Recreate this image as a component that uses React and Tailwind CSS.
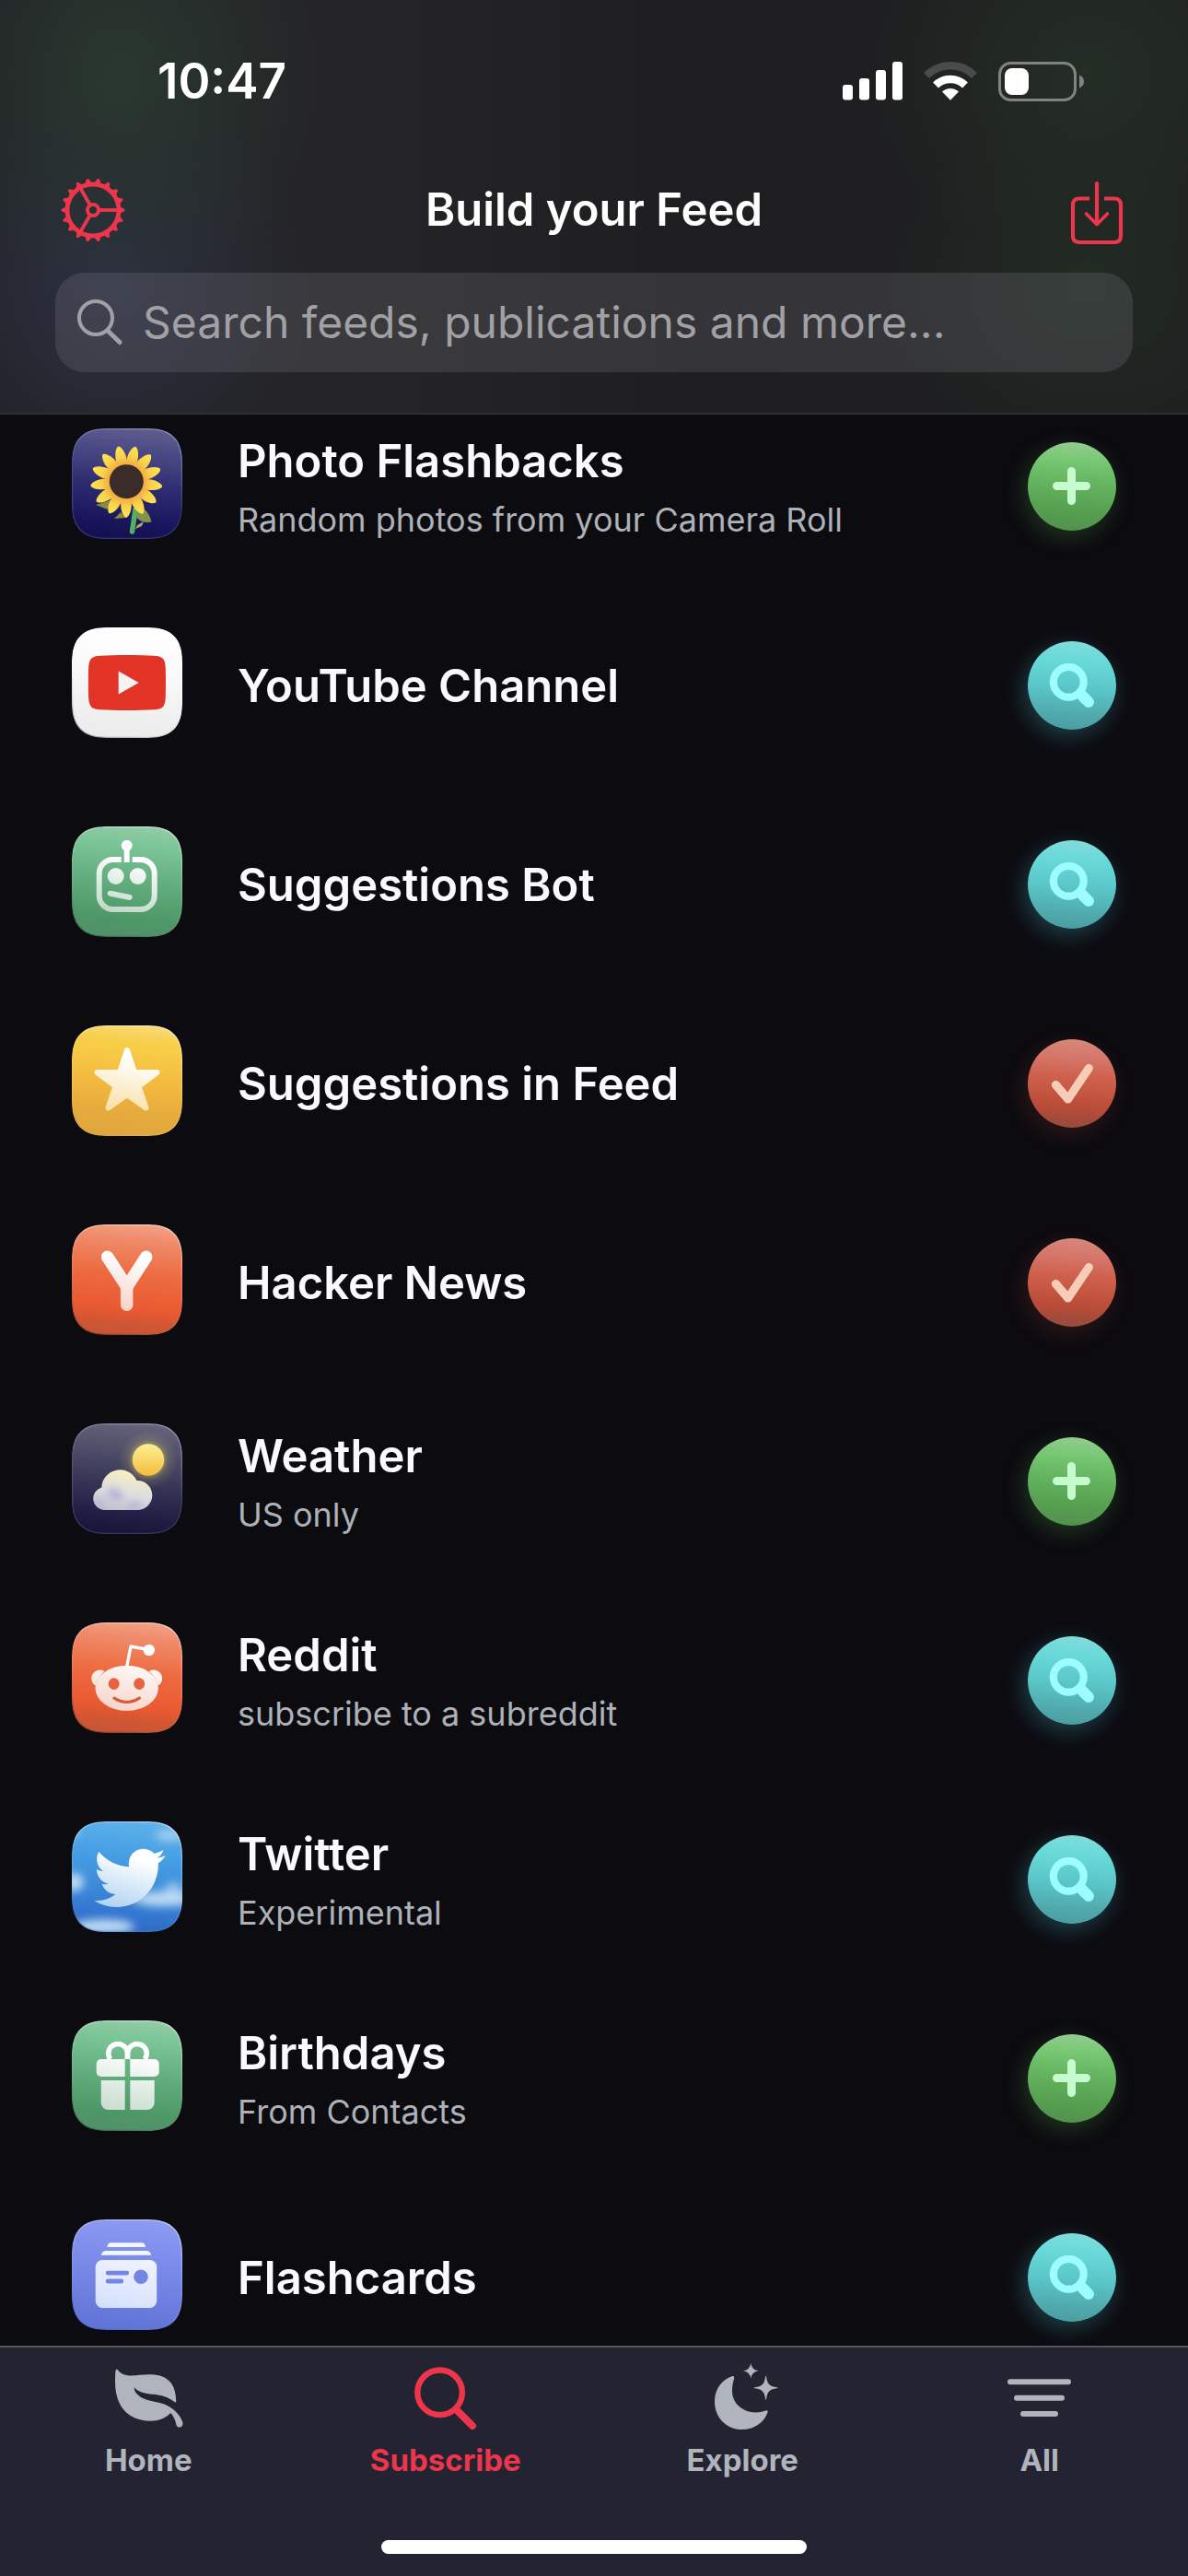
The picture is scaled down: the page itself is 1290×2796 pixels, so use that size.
import { useState } from "react";

const SQUIRCLE =
  "M0 37C0 12 12 0 37 0H83C108 0 120 12 120 37V83C120 108 108 120 83 120H37C12 120 0 108 0 83Z";

function Tile({ id, stops, glyph = ["#ffffff", "#ffffff"], edge = ["#ffffff", "#000000"], children }) {
  return (
    <svg viewBox="0 0 120 120" className="w-[120px] h-[120px]" aria-hidden="true">
      <defs>
        <linearGradient id={`${id}-bg`} x1="0.55" y1="0" x2="0.45" y2="1">
          {stops.map(([offset, color]) => (
            <stop key={offset} offset={offset} stopColor={color} />
          ))}
        </linearGradient>
        <linearGradient id={`${id}-glyph`} gradientUnits="userSpaceOnUse" x1="68" y1="25" x2="52" y2="95">
          <stop offset="0.15" stopColor={glyph[0]} />
          <stop offset="1" stopColor={glyph[1]} />
        </linearGradient>
        <linearGradient id={`${id}-edge`} x1="0.7" y1="0" x2="0.3" y2="1">
          <stop offset="0" stopColor={edge[0]} stopOpacity="0.45" />
          <stop offset="0.5" stopColor={edge[0]} stopOpacity="0.1" />
          <stop offset="1" stopColor={edge[1]} stopOpacity="0.3" />
        </linearGradient>
        <clipPath id={`${id}-clip`}>
          <path d={SQUIRCLE} />
        </clipPath>
      </defs>
      <g clipPath={`url(#${id}-clip)`}>
        <path d={SQUIRCLE} fill={`url(#${id}-bg)`} />
        {children}
        <path d={SQUIRCLE} fill="none" stroke={`url(#${id}-edge)`} strokeWidth="2.5" />
      </g>
    </svg>
  );
}

const ORANGE = [[0, "#f3a085"], [0.12, "#ef8d6c"], [0.45, "#ed6a40"], [0.75, "#ea5a31"], [0.88, "#d25633"], [1, "#c65636"]];
const GREEN = [[0, "#93caa5"], [0.15, "#7cc698"], [0.5, "#62ac7d"], [0.85, "#4d9767"], [1, "#53906a"]];

function PhotosIcon() {
  const petals = Array.from({ length: 13 }, (_, i) => 14.5 + i * 27.7);
  return (
    <Tile
      id="photos"
      edge={["#c9c4ff", "#8d86e8"]}
      stops={[[0, "#5e5c8c"], [0.15, "#504e88"], [0.5, "#302e72"], [0.85, "#18155c"], [1, "#131051"]]}
    >
      <defs>
        <linearGradient id="petal" x1="0" y1="0" x2="0" y2="1">
          <stop offset="0" stopColor="#fae651" />
          <stop offset="0.5" stopColor="#f9d24d" />
          <stop offset="1" stopColor="#f0a03e" />
        </linearGradient>
      </defs>
      <path d="M72 87C76 84 84 90 86.5 101.500C80 103 73 101 70 96Z" fill="#86944b" />
      <path d="M71 105L78 101L76 106L69 109Z" fill="#a9a866" />
      <path d="M26 83L42 78L39 88Z" fill="#8d8a3e" />
      <path d="M46 98L53 91L58 97Z" fill="#8d8a3e" />
      <path d="M69 88L65.500 112" stroke="#57ad62" strokeWidth="5.500" strokeLinecap="round" />
      {petals.map((a) => (
        <path
          key={a}
          d="M59.300 18.500C63.500 19.500 67.500 32 63.500 42H55.100C51.100 32 55.100 19.500 59.300 18.500Z"
          fill="url(#petal)"
          transform={`rotate(${a} 59.300 57.700)`}
        />
      ))}
      <circle cx="59.300" cy="57.700" r="18.500" fill="#3a2c29" />
    </Tile>
  );
}

function YouTubeIcon() {
  return (
    <Tile id="youtube" stops={[[0, "#ffffff"], [0.3, "#fbfbfb"], [1, "#ebebeb"]]}>
      <path
        d="M18 46C18.500 34 21 31.300 31 30.700C47 29.800 73 29.800 89 30.700C99 31.300 101.500 34 101.800 46C102 56 102 64 101.800 74C101.500 86 99 88.700 89 89.300C73 90.200 47 90.200 31 89.300C21 88.700 18.500 86 18 74C17.800 64 17.800 56 18 46Z"
        fill="#e13326"
      />
      <path d="M50.700 47.600L72.700 60L50.700 72.600Z" fill="#f6f3f3" />
    </Tile>
  );
}

function BotIcon() {
  return (
    <Tile id="bot" stops={GREEN} glyph={["#ffffff", "#bfd8c8"]}>
      <g fill="none" stroke="url(#bot-glyph)" strokeWidth="6">
        <path d="M53.700 36H44.700A15 15 0 0 0 29.700 51V75A15 15 0 0 0 44.700 90H74.700A15 15 0 0 0 89.700 75V51A15 15 0 0 0 74.700 36H65.700" />
        <path d="M41.700 72.700L62.700 77" strokeLinecap="round" />
      </g>
      <rect x="56.700" y="22" width="6" height="17" fill="#ffffff" />
      <g fill="url(#bot-glyph)">
        <circle cx="59.700" cy="20.700" r="6" />
        <circle cx="47.700" cy="54" r="9" />
        <circle cx="71.700" cy="54" r="9" />
      </g>
    </Tile>
  );
}

function StarIcon() {
  return (
    <Tile
      id="star"
      edge={["#ffffff", "#e9a93a"]}
      stops={[[0, "#f8d976"], [0.14, "#f7cf4a"], [0.22, "#f7cc46"], [0.5, "#f3bb40"], [0.75, "#e8ac3c"], [1, "#dea63e"]]}
      glyph={["#ffffff", "#f8e0a6"]}
    >
      <path
        d="M60 27L68 51H92.500L72.500 66L80.500 89.500L60 75L39.500 89.500L47.500 66L27.500 51H52Z"
        fill="url(#star-glyph)"
        stroke="url(#star-glyph)"
        strokeWidth="6"
        strokeLinejoin="round"
      />
    </Tile>
  );
}

function HackerNewsIcon() {
  return (
    <Tile id="hn" stops={ORANGE} glyph={["#ffffff", "#f6d0c5"]}>
      <g stroke="url(#hn-glyph)" strokeWidth="13.500" strokeLinecap="round">
        <line x1="38.600" y1="35.300" x2="60" y2="68" />
        <line x1="80.700" y1="35.300" x2="59.500" y2="68" />
        <line x1="59.600" y1="68" x2="59.700" y2="87.300" />
      </g>
    </Tile>
  );
}

function WeatherIcon() {
  return (
    <Tile
      id="weather"
      edge={["#cfcbe6", "#8683c4"]}
      stops={[[0, "#65637b"], [0.15, "#59576f"], [0.5, "#3a3958"], [0.85, "#1f1d44"], [1, "#171538"]]}
    >
      <defs>
        <linearGradient id="sun" x1="0" y1="0" x2="0" y2="1">
          <stop offset="0" stopColor="#fcf08f" />
          <stop offset="1" stopColor="#f4bd40" />
        </linearGradient>
        <radialGradient id="sun-glow">
          <stop offset="0.5" stopColor="#f9e36a" stopOpacity="0.4" />
          <stop offset="0.7" stopColor="#f9e36a" stopOpacity="0.12" />
          <stop offset="1" stopColor="#f9e36a" stopOpacity="0" />
        </radialGradient>
        <linearGradient id="cloud" x1="0.7" y1="0" x2="0.4" y2="1">
          <stop offset="0" stopColor="#fdf3bd" />
          <stop offset="0.6" stopColor="#dddce0" />
          <stop offset="1" stopColor="#bfc0cd" />
        </linearGradient>
        <filter id="cloud-blur" x="-50%" y="-50%" width="200%" height="200%">
          <feGaussianBlur stdDeviation="4" />
        </filter>
        <clipPath id="cloud-clip">
          <path d="M35 94A12.500 12.500 0 0 1 32.300 69.500A20 20 0 0 1 70.500 62A16 16 0 1 1 72 94Z" />
        </clipPath>
      </defs>
      <circle cx="83" cy="39.500" r="32" fill="url(#sun-glow)" />
      <circle cx="83" cy="39.500" r="17.300" fill="url(#sun)" />
      <g clipPath="url(#cloud-clip)">
        <rect x="20" y="48" width="70" height="48" fill="url(#cloud)" />
        <g filter="url(#cloud-blur)" fill="#a9abd6">
          <ellipse cx="47" cy="77" rx="9" ry="5" transform="rotate(25 47 77)" />
          <circle cx="29" cy="87" r="4" />
          <ellipse cx="68" cy="90" rx="7" ry="4" />
        </g>
      </g>
    </Tile>
  );
}

function RedditIcon() {
  return (
    <Tile id="reddit" stops={ORANGE} glyph={["#ffffff", "#f7d5cb"]}>
      <path d="M59.700 48L64 26L80 29" fill="none" stroke="#ffffff" strokeWidth="3.400" strokeLinejoin="round" />
      <circle cx="83.800" cy="30" r="6.200" fill="#ffffff" />
      <g fill="url(#reddit-glyph)">
        <path d="M35.500 53A9 9 0 1 0 25.500 68.700Q28 59.500 35.500 53Z" />
        <path d="M83.900 53A9 9 0 1 1 93.900 68.700Q91.500 59.500 83.900 53Z" />
        <ellipse cx="59.700" cy="71.300" rx="34.200" ry="24.600" />
      </g>
      <ellipse cx="45.700" cy="66.600" rx="6" ry="6.300" fill="#e5633f" />
      <ellipse cx="73.200" cy="66.600" rx="6" ry="6.300" fill="#e5633f" />
      <path d="M46 82.200Q59.700 90.800 73.400 82.200" fill="none" stroke="#d95a36" strokeWidth="3.200" strokeLinecap="round" />
    </Tile>
  );
}

function TwitterIcon() {
  return (
    <Tile
      id="twitter"
      edge={["#ffffff", "#2b63c0"]}
      stops={[[0, "#5eb0ea"], [0.3, "#46a0e4"], [0.6, "#3c8bdb"], [0.8, "#3579d2"], [1, "#2d68c4"]]}
    >
      <defs>
        <filter id="sky-blur" x="-50%" y="-50%" width="200%" height="200%">
          <feGaussianBlur stdDeviation="5" />
        </filter>
        <linearGradient id="bird" x1="0.65" y1="0.2" x2="0.35" y2="1">
          <stop offset="0" stopColor="#ffffff" />
          <stop offset="1" stopColor="#b4d5f2" />
        </linearGradient>
      </defs>
      <g filter="url(#sky-blur)" fill="#b9daf3">
        <ellipse cx="106" cy="15" rx="15" ry="6" opacity="0.8" />
        <ellipse cx="3" cy="11" rx="5" ry="6" opacity="0.7" />
        <ellipse cx="2" cy="66" rx="11" ry="10" />
        <ellipse cx="100" cy="84" rx="34" ry="8" />
        <ellipse cx="110" cy="74" rx="10" ry="8" opacity="0.7" />
        <ellipse cx="34" cy="114" rx="34" ry="8" />
      </g>
      <path
        transform="translate(24 22.400) scale(3.240)"
        fill="url(#bird)"
        d="M23.953 4.570a10 10 0 01-2.825.775 4.958 4.958 0 002.163-2.723c-.951.555-2.005.959-3.127 1.184a4.920 4.920 0 00-8.384 4.482C7.690 8.095 4.067 6.130 1.640 3.162a4.822 4.822 0 00-.666 2.475c0 1.710.870 3.213 2.188 4.096a4.904 4.904 0 01-2.228-.616v.060a4.923 4.923 0 003.946 4.827 4.996 4.996 0 01-2.212.085 4.936 4.936 0 004.604 3.417 9.867 9.867 0 01-6.102 2.105c-.390 0-.779-.023-1.170-.067a13.995 13.995 0 007.557 2.209c9.053 0 13.998-7.496 13.998-13.985 0-.210 0-.420-.015-.630A9.935 9.935 0 0024 4.590z"
      />
    </Tile>
  );
}

function GiftIcon() {
  return (
    <Tile id="gift" stops={GREEN} glyph={["#ffffff", "#cbdfd2"]}>
      <g fill="none" stroke="#ffffff" strokeWidth="5.500">
        <path d="M41.800 42A10.300 10.300 0 1 1 60.300 35.500V42" />
        <path d="M79.200 42A10.300 10.300 0 1 0 60.700 35.500V42" />
      </g>
      <g fill="url(#gift-glyph)">
        <path d="M57.700 42H31.700A5 5 0 0 0 26.700 47V56A5 5 0 0 0 31.700 61H57.700Z" />
        <path d="M63.300 42H89.700A5 5 0 0 1 94.700 47V56A5 5 0 0 1 89.700 61H63.300Z" />
        <path d="M57.700 65H31.700V89A8 8 0 0 0 39.700 97H57.700Z" />
        <path d="M63.300 65H89.700V89A8 8 0 0 1 81.700 97H63.300Z" />
      </g>
    </Tile>
  );
}

function FlashcardsIcon() {
  return (
    <Tile
      id="cards"
      edge={["#ffffff", "#2b3fbf"]}
      stops={[[0, "#8c9af2"], [0.3, "#7f8eec"], [0.7, "#6d7fe0"], [1, "#6074d6"]]}
      glyph={["#f2f4ff", "#d6e2fd"]}
    >
      <g fill="#f4f6ff">
        <path d="M38.300 30Q39 25.300 42.500 25.300H76Q79.300 25.300 80 30Z" />
        <path d="M31.700 38.800Q33 34 37 34H81Q85 34 86.300 38.800Z" />
      </g>
      <rect x="25.700" y="44" width="66.500" height="52" rx="7.500" fill="url(#cards-glyph)" />
      <g fill="#7486e3">
        <rect x="36.700" y="55.700" width="25.500" height="4.800" rx="2.400" />
        <rect x="36.700" y="64.600" width="19.500" height="4.800" rx="2.400" />
        <circle cx="75" cy="62.300" r="7.800" />
      </g>
    </Tile>
  );
}

function GearIcon() {
  const teeth = Array.from({ length: 18 }, (_, i) => i * 20);
  return (
    <svg viewBox="0 0 70 70" className="w-[70px] h-[70px]" fill="none" stroke="currentColor" aria-hidden="true">
      <circle cx="35" cy="35" r="28" strokeWidth="4.800" />
      <circle cx="35" cy="35" r="6" strokeWidth="4" />
      {[0, 120, 240].map((a) => (
        <path key={a} d="M42 35H61" strokeWidth="3.800" transform={`rotate(${a} 35 35)`} />
      ))}
      {teeth.map((a) => (
        <path
          key={a}
          d="M64 31.300L69 33.700Q70.200 35 69 36.300L64 38.700Z"
          fill="currentColor"
          stroke="none"
          transform={`rotate(${a} 35 35)`}
        />
      ))}
    </svg>
  );
}

function DownloadIcon() {
  return (
    <svg viewBox="0 -6 58 76" className="w-[58px] h-[76px]" fill="none" stroke="currentColor" strokeWidth="4.200" aria-hidden="true">
      <path d="M21 19.500H10Q3 19.500 3 26.500V60Q3 67 10 67H48Q55 67 55 60V26.500Q55 19.500 48 19.500H37" />
      <path d="M29 3V47" strokeLinecap="round" />
      <path d="M17.500 36L29 47.500L40.500 36" strokeLinecap="round" strokeLinejoin="round" strokeWidth="3.600" />
    </svg>
  );
}

function StatusIcons() {
  return (
    <div className="flex items-center gap-[23px]">
      <svg viewBox="0 0 65 42" className="w-[65px] h-[42px]" fill="#ffffff" aria-hidden="true">
        <rect x="0" y="25" width="11" height="16.500" rx="3" />
        <rect x="18" y="18" width="11" height="23.500" rx="3" />
        <rect x="36" y="9" width="11" height="32.500" rx="3" />
        <rect x="54" y="0" width="11" height="41.500" rx="3" />
      </svg>
      <svg viewBox="0 0 58 42" className="w-[58px] h-[42px]" fill="none" aria-hidden="true">
        <path d="M3 15A37 37 0 0 1 55 15" stroke="#4a4b4b" strokeWidth="8.500" />
        <path d="M13 25.500A23 23 0 0 1 45 25.500" stroke="#ffffff" strokeWidth="8.500" />
        <path d="M20 32.500A13 13 0 0 1 38 32.500L29 41.700Z" fill="#ffffff" />
      </svg>
      <svg viewBox="0 0 93 43" className="w-[93px] h-[43px]" aria-hidden="true">
        <rect x="1.500" y="1.500" width="82" height="40" rx="12" fill="none" stroke="#80837f" strokeWidth="3" />
        <rect x="7" y="7" width="26" height="29" rx="8" fill="#ffffff" />
        <path d="M88 14.500Q93 16.500 93 21.500T88 28.500Z" fill="#80837f" />
      </svg>
    </div>
  );
}

function LeafIcon() {
  return (
    <svg viewBox="0 0 76 72" className="w-[76px] h-[72px]" fill="currentColor" aria-hidden="true">
      <path d="M4.500 7C7 10 10 12.800 17 13.400C25 14 32 12 41 12.300C60 13 68 23 68.300 41.500Q68 43.300 66.500 42C60 37 52 34.500 43 33.800C34 33 26 31 23 26.200C22 29 25 34.500 32 38C42 42.500 50 41.500 58.600 46C67 50 74 58 75.500 65Q75.500 69.500 71.500 69.700Q69 69.500 68.500 67C67 61 65.500 57 62.200 54C57 60 49 62.800 40 62.700C15 62 2 46 2 20Q2 12 2.500 8Q3.200 5.600 4.500 7Z" />
    </svg>
  );
}

function TabSearchIcon() {
  return (
    <svg viewBox="0 0 76 72" className="w-[76px] h-[72px]" fill="none" stroke="currentColor" aria-hidden="true">
      <circle cx="31.600" cy="31.800" r="24.300" strokeWidth="6.400" />
      <path d="M49.500 50.500L67 68" strokeWidth="8" strokeLinecap="round" />
    </svg>
  );
}

function MoonIcon() {
  return (
    <svg viewBox="0 0 76 72" className="w-[76px] h-[72px] overflow-visible" fill="currentColor" aria-hidden="true">
      <path d="M27.500 14C15 18 8 29 8 41.700C8 59 21 72 37.500 72C51 72 62 64.500 65.700 53Q66 50.500 63.500 51.500C45 58 27 47 27 30C27 24 28.500 19 29.300 16Q29.300 13.500 27.500 14Z" />
      <path d="M47.300 0Q48.300 7.300 55.600 8.300Q48.300 9.300 47.300 17Q46.300 9.300 39 8.300Q46.300 7.300 47.300 0Z" />
      <path d="M63.600 13.500Q64 13.500 64.600 17.500Q65.800 24.500 72.600 25.700Q76.800 26.300 76.800 26.700Q76.800 27.100 72.600 27.700Q65.800 28.900 64.600 36Q64 40 63.600 40Q63.200 40 62.600 36Q61.400 28.900 54.600 27.700Q50.600 27.100 50.600 26.700Q50.600 26.300 54.600 25.700Q61.400 24.500 62.600 17.500Q63.200 13.500 63.600 13.500Z" />
    </svg>
  );
}

function LinesIcon() {
  return (
    <svg viewBox="0 0 76 72" className="w-[76px] h-[72px]" stroke="currentColor" strokeWidth="6" strokeLinecap="round" aria-hidden="true">
      <path d="M6 20.300H69M13 37.700H62M20 55H55" />
    </svg>
  );
}

const ACTIONS = {
  add: {
    label: "Add",
    button:
      "bg-linear-[184deg,#97cd95_0%,#77c872_22%,#62b15d_50%,#56a050_75%,#528f4f_100%] shadow-[-4px_7px_26px_rgba(98,190,80,0.24)] text-[#c5fbce]",
    glyph: <path d="M47.500 31.500V63.500M31.500 47.500H63.500" strokeWidth="9" />,
  },
  search: {
    label: "Search",
    button:
      "bg-linear-[184deg,#86dcdc_0%,#68d9d9_24%,#5ac6c8_52%,#50a9ac_82%,#4a9c9e_100%] shadow-[-4px_7px_26px_rgba(80,210,225,0.28)] text-[#9dfcff]",
    glyph: (
      <>
        <circle cx="44.300" cy="44.300" r="16.400" strokeWidth="8.200" />
        <path d="M57.500 57.500L66 66" strokeWidth="12" />
      </>
    ),
  },
  added: {
    label: "Remove",
    button:
      "bg-linear-[184deg,#d98a7e_0%,#d5766a_22%,#ce5f4a_45%,#bb4d38_74%,#9f4a3c_90%,#94503e_100%] shadow-[-4px_7px_26px_rgba(220,90,60,0.16)] text-[#f7cdb8]",
    glyph: <path d="M30.500 49.500L43.700 65L66.300 31.500" strokeWidth="9.200" />,
  },
};

const FEEDS = [
  { title: "Photo Flashbacks", note: "Random photos from your Camera Roll", icon: PhotosIcon, action: "add" },
  { title: "YouTube Channel", icon: YouTubeIcon, action: "search" },
  { title: "Suggestions Bot", icon: BotIcon, action: "search" },
  { title: "Suggestions in Feed", icon: StarIcon, action: "added" },
  { title: "Hacker News", icon: HackerNewsIcon, action: "added" },
  { title: "Weather", note: "US only", icon: WeatherIcon, action: "add" },
  { title: "Reddit", note: "subscribe to a subreddit", icon: RedditIcon, action: "search" },
  { title: "Twitter", note: "Experimental", icon: TwitterIcon, action: "search" },
  { title: "Birthdays", note: "From Contacts", icon: GiftIcon, action: "add" },
  { title: "Flashcards", icon: FlashcardsIcon, action: "search" },
];

const TABS = [
  { label: "Home", icon: LeafIcon },
  { label: "Subscribe", icon: TabSearchIcon },
  { label: "Explore", icon: MoonIcon },
  { label: "All", icon: LinesIcon },
];

function FeedRow({ feed }) {
  const { title, note, icon: Icon } = feed;
  const action = ACTIONS[feed.action];

  return (
    <li className="flex items-center gap-[60px] h-[216px] px-[78px]">
      <div className="shrink-0 pb-[6px]">
        <Icon />
      </div>
      <div className="flex-1 min-w-0 flex flex-col gap-[9px] pt-[2px]">
        <h2 className="text-[49px] leading-[60px] font-semibold text-[#fafafc] truncate">{title}</h2>
        {note && <p className="text-[36px] leading-[48px] text-[#adb1b8] truncate">{note}</p>}
      </div>
      <button
        type="button"
        aria-label={`${action.label} ${title}`}
        className={`shrink-0 w-24 h-24 rounded-full ${action.button}`}
      >
        <svg
          viewBox="0 0 96 96"
          className="w-24 h-24"
          fill="none"
          stroke="currentColor"
          strokeLinecap="round"
          strokeLinejoin="round"
          aria-hidden="true"
        >
          {action.glyph}
        </svg>
      </button>
    </li>
  );
}

export default function App() {
  const [query, setQuery] = useState("");
  const [tab, setTab] = useState("Subscribe");

  return (
    <div className="h-screen flex flex-col overflow-hidden bg-[#0c0b10] text-white font-['Inter',sans-serif]">
      <header className="shrink-0 border-b-2 border-[#2e2f32] bg-[radial-gradient(ellipse_220px_260px_at_130px_80px,#2a3830_0%,transparent_100%),radial-gradient(ellipse_220px_230px_at_120px_310px,#2d3043_0%,transparent_100%),radial-gradient(ellipse_240px_220px_at_1180px_80px,#242e25_0%,transparent_100%),radial-gradient(ellipse_220px_190px_at_1180px_310px,#222b24_0%,transparent_100%),linear-gradient(90deg,#202124_0%,#252527_30%,#1e1e20_58%,#1e1f20_100%)]">
        <div className="flex items-center justify-between h-[176px] pl-[171px] pr-[113px]">
          <time className="text-[53px] leading-[60px] font-semibold">10:47</time>
          <StatusIcons />
        </div>

        <div className="flex items-center justify-between h-[104px] pl-[66px] pr-[70px]">
          <button type="button" aria-label="Settings" className="text-[#ed364c]">
            <GearIcon />
          </button>
          <h1 className="text-[49px] leading-[60px] font-semibold">Build your Feed</h1>
          <button type="button" aria-label="Import feeds" className="w-[66px] flex justify-end text-[#ed364c]">
            <DownloadIcon />
          </button>
        </div>

        <div className="px-[60px] pt-4 pb-11">
          <label className="flex items-center gap-[21px] h-[108px] px-6 rounded-[32px] bg-[#7d7b85]/25 text-[#a1a0a8]">
            <svg viewBox="0 0 50 50" className="shrink-0 w-[50px] h-[50px]" fill="none" stroke="currentColor" aria-hidden="true">
              <circle cx="20" cy="20" r="18" strokeWidth="4" />
              <path d="M33 34L46 46.500" strokeWidth="5" strokeLinecap="round" />
            </svg>
            <input
              type="search"
              aria-label="Search feeds"
              value={query}
              onChange={(e) => setQuery(e.target.value)}
              placeholder="Search feeds, publications and more..."
              className="flex-1 min-w-0 bg-transparent outline-none text-[48px] leading-[60px] placeholder:text-[#a1a0a5]"
            />
          </label>
        </div>
      </header>

      {/* the list is scrolled a little under the header */}
      <main className="flex-1 min-h-0 overflow-hidden">
        <ul className="-mt-[30px]">
          {FEEDS.map((feed) => (
            <FeedRow key={feed.title} feed={feed} />
          ))}
        </ul>
      </main>

      <footer className="shrink-0 border-t-2 border-[#55545d] bg-[#242331]">
        <nav className="grid grid-cols-4 pt-[17px]">
          {TABS.map(({ label, icon: Icon }) => (
            <button
              key={label}
              type="button"
              onClick={() => setTab(label)}
              className={`flex flex-col items-center gap-[9px] ${tab === label ? "text-[#ed364c]" : "text-[#b0b4bc]"}`}
            >
              <Icon />
              <span className="text-[33px] leading-[48px] font-bold">{label}</span>
            </button>
          ))}
        </nav>
        <div className="flex justify-center pt-[63px] pb-6">
          <div className="w-[462px] h-[15px] rounded-full bg-white" />
        </div>
      </footer>
    </div>
  );
}
